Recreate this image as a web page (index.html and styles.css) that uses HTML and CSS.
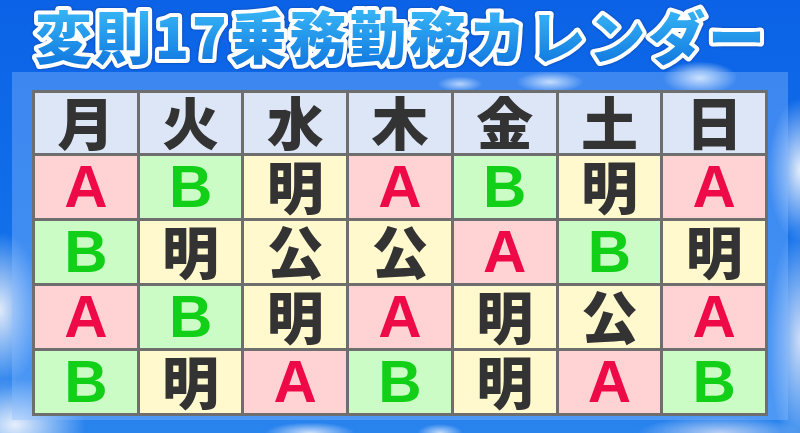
FILE: index.html
```html
<!DOCTYPE html>
<html lang="ja">
<head>
<meta charset="utf-8">
<title>変則17乗務勤務カレンダー</title>
<link rel="stylesheet" href="styles.css">
</head>
<body>
<div class="scene">
  <header class="title">
    <svg class="title-svg" width="800" height="72" viewBox="0 0 800 72">
      <defs>
        <linearGradient id="tg" x1="0" y1="0" x2="0" y2="1">
          <stop offset="0" stop-color="#42c6fb"/>
          <stop offset="1" stop-color="#0a6edc"/>
        </linearGradient>
      </defs>
      <text class="title-text" x="35" y="59" textLength="730" lengthAdjust="spacing" fill="url(#tg)" stroke="#ffffff" stroke-width="8" stroke-linejoin="round" paint-order="stroke">変則17乗務勤務カレンダー</text>
    </svg>
  </header>
  <main class="panel">
    <div class="cal">
      <div class="cell head">月</div>
      <div class="cell head">火</div>
      <div class="cell head">水</div>
      <div class="cell head">木</div>
      <div class="cell head">金</div>
      <div class="cell head">土</div>
      <div class="cell head">日</div>

      <div class="cell a">A</div>
      <div class="cell b">B</div>
      <div class="cell k">明</div>
      <div class="cell a">A</div>
      <div class="cell b">B</div>
      <div class="cell k">明</div>
      <div class="cell a">A</div>

      <div class="cell b">B</div>
      <div class="cell k">明</div>
      <div class="cell k">公</div>
      <div class="cell k">公</div>
      <div class="cell a">A</div>
      <div class="cell b">B</div>
      <div class="cell k">明</div>

      <div class="cell a">A</div>
      <div class="cell b">B</div>
      <div class="cell k">明</div>
      <div class="cell a">A</div>
      <div class="cell k">明</div>
      <div class="cell k">公</div>
      <div class="cell a">A</div>

      <div class="cell b">B</div>
      <div class="cell k">明</div>
      <div class="cell a">A</div>
      <div class="cell b">B</div>
      <div class="cell k">明</div>
      <div class="cell a">A</div>
      <div class="cell b">B</div>
    </div>
  </main>
</div>
</body>
</html>
```

FILE: styles.css
```css
html, body {
  margin: 0;
  padding: 0;
  width: 800px;
  height: 433px;
  overflow: hidden;
}

.scene {
  width: 800px;
  height: 433px;
  display: flex;
  flex-direction: column;
  font-family: "Noto Sans CJK JP", "Noto Sans", sans-serif;
  background:
    radial-gradient(ellipse 45px 14px at 550px 82px, rgba(255,255,255,0.9), rgba(255,255,255,0) 75%),
    radial-gradient(ellipse 50px 22px at 700px 78px, rgba(255,255,255,0.95), rgba(255,255,255,0) 75%),
    radial-gradient(ellipse 30px 10px at 460px 84px, rgba(255,255,255,0.8), rgba(255,255,255,0) 75%),
    radial-gradient(ellipse 40px 90px at 800px 170px, rgba(240,244,252,0.95), rgba(240,244,252,0) 80%),
    radial-gradient(ellipse 40px 140px at 800px 340px, rgba(215,226,248,0.95), rgba(215,226,248,0) 80%),
    radial-gradient(ellipse 55px 100px at 0px 310px, rgba(235,240,250,0.95), rgba(235,240,250,0) 78%),
    radial-gradient(ellipse 90px 60px at 15px 425px, rgba(240,244,252,0.95), rgba(240,244,252,0) 78%),
    radial-gradient(ellipse 60px 14px at 310px 433px, rgba(220,232,250,0.9), rgba(220,232,250,0) 75%),
    radial-gradient(ellipse 30px 12px at 440px 433px, rgba(220,232,250,0.85), rgba(220,232,250,0) 75%),
    radial-gradient(ellipse 110px 22px at 720px 433px, rgba(200,215,245,0.9), rgba(200,215,245,0) 75%),
    linear-gradient(180deg, #0b62e6 0%, #1170ea 55%, #2a84ee 100%);
}

.title {
  height: 72px;
  flex: none;
}

.title-svg {
  display: block;
  overflow: visible;
}

.title-text {
  font-family: "Noto Sans CJK JP", sans-serif;
  font-weight: 900;
  font-size: 57px;
  filter: drop-shadow(0 0 1px #0a3b9c);
}

.panel {
  margin: 0 12px;
  height: 348px;
  padding: 18px 20px 0 20px;
  background: rgba(140, 190, 255, 0.38);
  box-sizing: border-box;
}

.cal {
  display: grid;
  grid-template-columns: repeat(7, 1fr);
  grid-template-rows: 60px repeat(4, 62px);
  gap: 3px;
  padding: 3px;
  background: #6e6e6e;
  width: 736px;
  box-sizing: border-box;
}

.cell {
  display: flex;
  align-items: center;
  justify-content: center;
  font-size: 57px;
  font-weight: 900;
  line-height: 1;
  color: #333333;
}

.head {
  background: #dde6f6;
  padding-bottom: 5px;
}

.a {
  background: #ffd3d4;
  color: #ee0a47;
  font-family: "Liberation Sans", Arial, sans-serif;
  font-weight: 700;
  font-size: 60px;
}

.b {
  background: #ccfcc5;
  color: #12d018;
  font-family: "Liberation Sans", Arial, sans-serif;
  font-weight: 700;
  font-size: 60px;
}

.k {
  background: #fff9cd;
  color: #333333;
  padding-bottom: 5px;
}
```
